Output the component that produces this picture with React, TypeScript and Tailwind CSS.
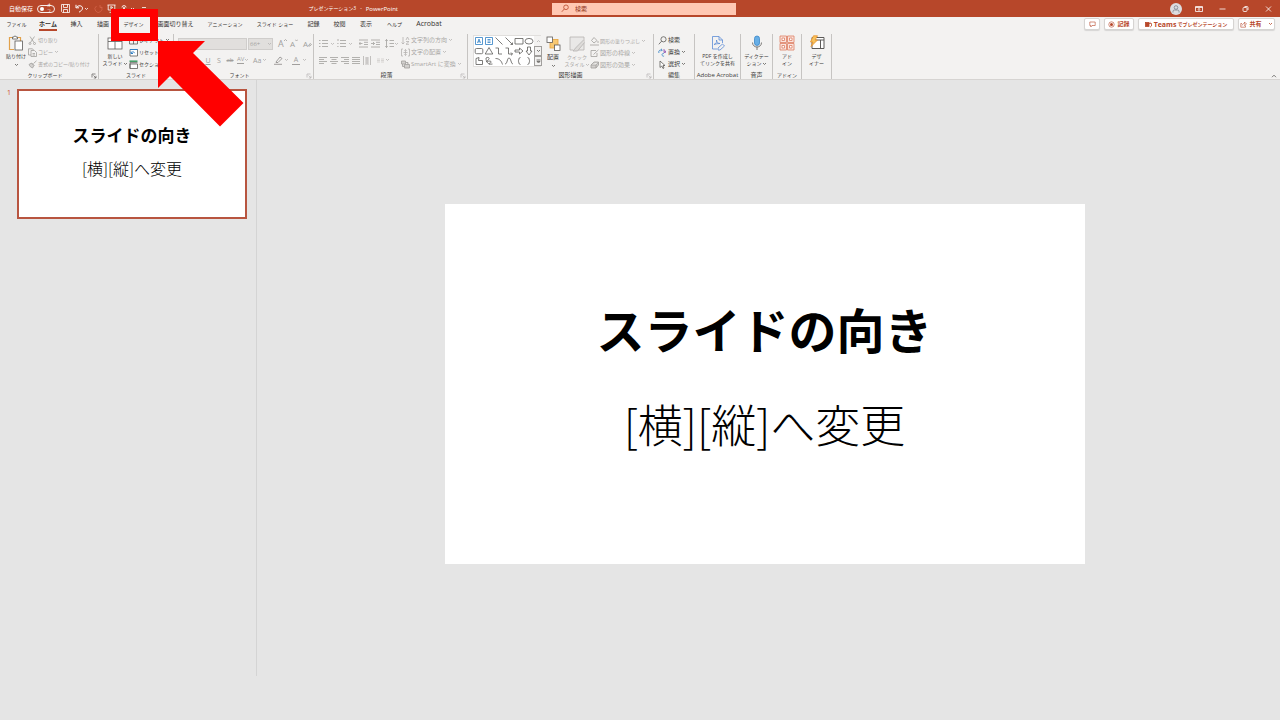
import React from "react";

type IconProps = { w?: number; h?: number; c?: string; children: React.ReactNode };

const DARK = "#5c5a58";
const DIM = "#b5b3b1";
const BLUE = "#2f7fc4";
const RUST = "#b7472a";

function Icon({ w = 9, h = 9, c = DARK, children }: IconProps) {
  return (
    <svg
      width={w}
      height={h}
      viewBox={`0 0 ${w} ${h}`}
      fill="none"
      stroke={c}
      strokeWidth="0.8"
      className="block shrink-0"
      aria-hidden="true"
    >
      {children}
    </svg>
  );
}

function Chevron({ c = DARK }: { c?: string }) {
  return (
    <Icon w={5} h={4} c={c}>
      <path d="M1 1l1.5 1.5L4 1" />
    </Icon>
  );
}

function Launcher({ c = DARK }: { c?: string }) {
  return (
    <button type="button" aria-label="詳細設定" className="flex">
      <Icon w={6} h={6} c={c}>
        <path d="M1 4.5V1h3.5M2.5 2.5l2.5 2.5M5 2.8V5H2.8" strokeWidth="0.7" />
      </Icon>
    </button>
  );
}

type GroupProps = {
  name: string;
  className: string;
  body?: string;
  launcher?: string;
  nameClass?: string;
  children: React.ReactNode;
};

function Group({ name, className, body = "", launcher, nameClass = "text-[5px]", children }: GroupProps) {
  return (
    <section aria-label={name} className={`flex shrink-0 flex-col border-r border-[#c6c4c2] ${className}`}>
      <div className={`flex h-[37px] shrink-0 ${body}`}>{children}</div>
      <div className="relative flex h-2 shrink-0 items-center justify-center whitespace-nowrap">
        <span className={`leading-[8px] ${nameClass}`}>{name}</span>
        {launcher && (
          <span className="absolute right-px top-[2px]">
            <Launcher c={launcher} />
          </span>
        )}
      </div>
    </section>
  );
}

type RowProps = { icon: React.ReactNode; text: string; size?: string; dim?: boolean; chevron?: boolean };

function Row({ icon, text, size = "text-[5px]", dim = false, chevron = false }: RowProps) {
  return (
    <button
      type="button"
      className={`flex h-3 items-center gap-px whitespace-nowrap ${size} ${dim ? "text-[#a9a7a5]" : "text-[#3b3a39]"}`}
    >
      {icon}
      <span>{text}</span>
      {chevron && <Chevron c={dim ? DIM : DARK} />}
    </button>
  );
}

type BigProps = {
  icon: React.ReactNode;
  lines: string[];
  dim?: boolean;
  chevron?: "below" | "inline";
  size?: string;
  className?: string;
};

function Big({ icon, lines, dim = false, chevron, size = "text-[5px]", className = "" }: BigProps) {
  return (
    <button
      type="button"
      className={`flex shrink-0 flex-col items-center whitespace-nowrap pt-px ${size} ${
        dim ? "text-[#a9a7a5]" : "text-[#3b3a39]"
      } ${className}`}
    >
      {icon}
      {lines.map((l, i) => (
        <span key={l} className="flex h-[7px] items-center leading-[7px] first-of-type:mt-[2px]">
          {l}
          {chevron === "inline" && i === lines.length - 1 && <Chevron c={dim ? DIM : DARK} />}
        </span>
      ))}
      {chevron === "below" && (
        <span className="mt-[3px]">
          <Chevron c={dim ? DIM : DARK} />
        </span>
      )}
    </button>
  );
}

function Lines({ kind }: { kind: "left" | "center" | "right" | "justify" }) {
  const d = {
    left: "M0 1.5h8M0 3.5h5M0 5.5h8M0 7.5h5",
    center: "M0 1.5h8M1.5 3.5h5M0 5.5h8M1.5 7.5h5",
    right: "M0 1.5h8M3 3.5h5M0 5.5h8M3 7.5h5",
    justify: "M0 1.5h8M0 3.5h8M0 5.5h8M0 7.5h8",
  }[kind];
  return (
    <button type="button" aria-label={kind}>
      <Icon w={8} c="#a19f9d">
        <path d={d} />
      </Icon>
    </button>
  );
}

const shapes: string[] = [
  "M1.5 1.5h7v7h-7zM3.5 7L5 3l1.5 4M4 5.8h2",
  "M1.5 1.5h7v7h-7zM3.5 3.5h3M3.5 5h3M3.5 6.5h3",
  "M1.5 1.5l7 7",
  "M1.5 1.5l7 7M8.5 6.5v2h-2",
  "M1 2.5h8v5.5H1z",
  "M9 5.2a4 2.8 0 1 1-8 0a4 2.8 0 1 1 8 0z",
  "M2.5 2.5h5a1.3 1.3 0 0 1 1.3 1.3v2.6a1.3 1.3 0 0 1-1.3 1.3h-5a1.3 1.3 0 0 1-1.3-1.3V3.8a1.3 1.3 0 0 1 1.3-1.3z",
  "M5 1.5l3.8 6.5H1.2z",
  "M1.5 2h3v6h3.5",
  "M1.5 2h3v6h4M7 6.5L8.5 8L7 9.4",
  "M1 4h4.5V2L9 5L5.5 8V6H1z",
  "M3.5 1v4H2l3 4l3-4H6.5V1z",
  "M2 2.5L5 1.5L4.5 4.5H8.5V8.5H2z",
  "M2 2c2-1.5 5 0 1.5 2.5s4-1 3.5 1.5s-3 0-1.5 2.5M2 2c0 4 2 7 6.5 6",
  "M1.5 2.5c4 0 6 2.5 7 6",
  "M1 8c2.5 0 2-6 4-6s2 6 4 6",
  "M6.500 1.500C4 1.500 5.500 4.500 4 5c1.500.5 0 3.500 2.500 3.500",
  "M3.500 1.500C6 1.500 4.500 4.500 6 5c-1.500.5 0 3.500-2.500 3.500",
];

function TitleBar() {
  return (
    <header className="grid h-[17px] shrink-0 grid-cols-[552fr_184fr_544fr] items-center bg-[#b7472a] text-[5px] text-white">
      <div className="flex items-center pl-[9px]">
        <span className="mr-[3px] w-[25px] text-[6px]">自動保存</span>
        <button
          type="button"
          aria-label="自動保存"
          className="mr-[6px] flex h-2 w-[18px] items-center gap-[2px] rounded-full border border-white/90 px-[2px] leading-[6px]"
        >
          <span className="size-1 shrink-0 rounded-full bg-white" />
          <span className="text-[4px]">オフ</span>
        </button>
        <div className="flex items-center">
          <button type="button" aria-label="保存" className="mr-[5px]">
            <Icon c="#fff">
              <path d="M.5 .5h8v8H1.500l-1-1zM2.500 .5v3h4v-3M2.500 8.500V5.500h4v3" />
            </Icon>
          </button>
          <button type="button" aria-label="元に戻す" className="mr-px flex items-center">
            <Icon c="#fff">
              <path d="M1 .8v3h3M1.200 3.500C3 1 7.500 1.200 7.500 4.200c0 2-2 3-3.500 4" strokeWidth="1" />
            </Icon>
            <Chevron c="#fff" />
          </button>
          <button type="button" aria-label="やり直し" className="ml-1 mr-1">
            <Icon c="#d4644a">
              <path d="M6 1v2.500h2.500M7 2.500A3.500 3.500 0 1 1 2.500 2" />
            </Icon>
          </button>
          <button type="button" aria-label="最初から表示" className="mr-1">
            <Icon c="#fff">
              <path d="M.5 1h8M1.200 1v5h6.600V1M4.500 6v2M2.500 8.300h4M3.800 2.500v2l2-1z" />
            </Icon>
          </button>
          <button type="button" aria-label="タッチ" className="flex items-center gap-[2px]">
            <Icon c="#fff" w={8}>
              <path d="M2 3.500a2 2 0 1 1 4 0M3.500 7V3.500a.5.5 0 0 1 1 0V5.500l2 .5v2.500h-3L2 6.500" />
            </Icon>
            <Chevron c="#fff" />
          </button>
          <button type="button" aria-label="その他" className="ml-[6px]">
            <Icon w={6} h={6} c="#fff">
              <path d="M1 1.500h4M1.500 3.500L3 5l1.500-1.500" />
            </Icon>
          </button>
        </div>
        <h1 className="ml-auto mr-[154px] flex items-center gap-1 whitespace-nowrap">
          <span>プレゼンテーション3</span>
          <span>-</span>
          <span className="text-[6px]">PowerPoint</span>
        </h1>
      </div>
      <label className="flex h-3 items-center gap-[6px] bg-[#ffc8b3] pl-[9px]">
        <Icon w={8} c={RUST}>
          <circle cx="5" cy="3.300" r="2.300" />
          <path d="M3.300 5L.8 7.800" />
        </Icon>
        <input
          type="text"
          aria-label="検索"
          placeholder="検索"
          className="min-w-0 flex-1 bg-transparent text-[6px] leading-3 outline-none placeholder:text-[#8c2c14] placeholder:opacity-100"
        />
      </label>
      <div className="flex items-center justify-end pr-2">
        <button type="button" aria-label="アカウント" className="mr-[13px] rounded-full bg-[#dcdde0]">
          <Icon w={12} h={12} c="#7b828c">
            <circle cx="6" cy="4.500" r="1.800" />
            <path d="M3 9.500V8.500a1.500 1.500 0 0 1 1.500-1.500h3A1.500 1.500 0 0 1 9 8.500v1" />
          </Icon>
        </button>
        <button type="button" aria-label="リボンの表示オプション" className="mr-4">
          <Icon w={8} h={6} c="#fff">
            <path d="M.5 .5h7v5h-7zM.5 1.500h7M4 5V2.500M3 3.500l1-1l1 1" />
          </Icon>
        </button>
        <button type="button" aria-label="最小化" className="mr-4">
          <Icon w={7} h={6} c="#fff">
            <path d="M.5 3h6" />
          </Icon>
        </button>
        <button type="button" aria-label="元のサイズに戻す" className="mr-4">
          <Icon w={7} h={6} c="#fff">
            <rect x="1" y="1.500" width="4" height="4" rx="1" />
            <path d="M2.500 .5H5a1 1 0 0 1 1 1V4" />
          </Icon>
        </button>
        <button type="button" aria-label="閉じる">
          <Icon w={7} h={6} c="#fff">
            <path d="M1 .5l5 5M6 .5l-5 5" />
          </Icon>
        </button>
      </div>
    </header>
  );
}

const tabs: [string, string][] = [
  ["ファイル", "w-[19px] text-[5px]"],
  ["ホーム", "w-[18px] text-[6px] font-bold"],
  ["挿入", "w-[13px] text-[6px]"],
  ["描画", "w-[14px] text-[6px]"],
  ["デザイン", "w-[21px] text-[5px]"],
  ["画面切り替え", "w-[37px] text-[6px]"],
  ["アニメーション", "w-[36px] text-[5px]"],
  ["スライド ショー", "w-[38px] text-[5px]"],
  ["記録", "w-[13px] text-[6px]"],
  ["校閲", "w-[13px] text-[6px]"],
  ["表示", "w-[14px] text-[6px]"],
  ["ヘルプ", "w-[17px] text-[5px]"],
  ["Acrobat", "w-[26px] text-[7px]"],
];

function TabBar() {
  const pill =
    "flex h-3 items-center justify-center gap-[2px] whitespace-nowrap rounded-[2px] border border-[#d6d4d2] bg-white font-bold text-[#b7472a] shadow-[0_1px_1px_rgba(0,0,0,0.12)]";
  return (
    <div className="flex h-[15px] shrink-0 items-start justify-between bg-[#f3f2f1] pl-[7px] pr-[5px] pt-px">
      <nav className="flex gap-[13px]">
        {tabs.map(([name, cls]) => (
          <a
            key={name}
            href="#"
            className={`flex h-[13px] items-end justify-center whitespace-nowrap border-b-2 text-[#333130] ${
              name === "ホーム" ? "border-[#b7472a]" : "border-transparent"
            } ${cls}`}
          >
            <span className="leading-[10px]">{name}</span>
          </a>
        ))}
      </nav>
      <div className="flex gap-1">
        <button type="button" aria-label="コメント" className={`w-4 ${pill}`}>
          <Icon w={7} h={7} c={RUST}>
            <path d="M.8 1h5.400v3.500H3L1.800 6V4.500H.8z" strokeWidth="0.600" />
          </Icon>
        </button>
        <button type="button" className={`w-[30px] text-[6px] ${pill}`}>
          <Icon w={7} h={7} c={RUST}>
            <circle cx="3.500" cy="3.500" r="2.700" strokeWidth="0.600" />
            <circle cx="3.500" cy="3.500" r="1.500" fill={RUST} stroke="none" />
          </Icon>
          記録
        </button>
        <button type="button" className={`w-[96px] text-[6px] ${pill}`}>
          <Icon w={7} h={7} c={RUST}>
            <rect x=".5" y="1.500" width="3.500" height="4" fill={RUST} />
            <path d="M4 2.500h2.500v2.500L5 6.200M5.500 1.300h.5" />
          </Icon>
          <span className="flex items-center">
            <span className="text-[7px]">Teams</span>
            <span className="ml-px text-[5px]">でプレゼンテーション</span>
          </span>
        </button>
        <button type="button" className={`w-[37px] text-[6px] ${pill}`}>
          <Icon w={7} h={7} c={RUST}>
            <path d="M2 2.500H.8v3.700h4.700V4.500M2 4.500c.3-1.500 1.500-2 2.500-2V1L6.500 3L4.500 4.500V3.500" strokeWidth="0.600" />
          </Icon>
          共有
          <span className="ml-1">
            <Chevron c={RUST} />
          </span>
        </button>
      </div>
    </div>
  );
}

function FontGroup() {
  const g = "text-[#a19f9d]";
  return (
    <Group name="フォント" className="w-[140px]" body="flex-col pl-1" launcher={DIM} nameClass="pr-2 text-[5px]">
      <div className={`flex h-[19px] shrink-0 items-center ${g}`}>
        <select
          aria-label="フォント名"
          className="h-3 w-[69px] appearance-none border border-[#cfcdcb] bg-[#e1dfdd]"
          defaultValue=""
        >
          <option value=""></option>
        </select>
        <div className="ml-px flex h-3 w-[25px] items-center justify-between border border-[#cfcdcb] bg-[#e1dfdd] pl-px">
          <span className="text-[6px]">66+</span>
          <Chevron c={DIM} />
        </div>
        <div className="ml-[5px] flex items-center gap-[3px]">
          <button type="button" className="flex w-2 items-start text-[9px] leading-3">
            A
            <Icon w={3} h={4} c="#a19f9d">
              <path d="M0 3l1.500-1.500L3 3" />
            </Icon>
          </button>
          <button type="button" className="ml-px flex w-2 items-start text-[8px] leading-3">
            A
            <Icon w={3} h={4} c="#a19f9d">
              <path d="M0 1.500L1.500 3L3 1.500" />
            </Icon>
          </button>
          <button type="button" className="ml-[2px] flex w-[10px] items-center text-[8px] leading-3">
            A
            <Icon w={4} h={6} c="#a19f9d">
              <path d="M.5 5L2 2.500l1.500 1L2 5z" />
            </Icon>
          </button>
        </div>
      </div>
      <div className={`flex h-[14px] shrink-0 items-center text-[7px] ${g}`}>
        <button type="button" className="w-3 font-bold">B</button>
        <button type="button" className="w-3 italic">I</button>
        <button type="button" className="w-3 underline">U</button>
        <button type="button" className="w-[10px]">S</button>
        <button type="button" className="w-3 text-[6px] line-through">ab</button>
        <button type="button" className="flex w-[17px] items-center pl-px">
          <span className="border-b border-[#a19f9d] text-[6px] leading-[7px]">AV</span>
          <Chevron c={DIM} />
        </button>
        <button type="button" className="flex w-[21px] items-center gap-px">
          Aa
          <Chevron c={DIM} />
        </button>
        <button type="button" aria-label="蛍光ペン" className="flex w-[18px] items-center gap-px">
          <Icon c="#8a8886">
            <path d="M2 6l4-5l2 1.500L4 6.500H2zM0 8.300h8" />
          </Icon>
          <Chevron c={DIM} />
        </button>
        <button type="button" className="flex items-center gap-[2px]">
          <span className="w-2 border-b border-[#a19f9d] text-center leading-[8px]">A</span>
          <Chevron c={DIM} />
        </button>
      </div>
    </Group>
  );
}

function ParagraphGroup() {
  return (
    <Group name="段落" className="w-[154px]" body="pl-[5px]" launcher={DIM} nameClass="pr-2 text-[6px]">
      <div className="flex w-[82px] shrink-0 flex-col">
        <div className="flex h-[19px] items-center">
          <button type="button" aria-label="箇条書き" className="flex w-[18px] items-center gap-[2px]">
            <Icon c="#a19f9d">
              <path d="M0 1.500h1.500M3 1.500h6M0 4.500h1.500M3 4.500h6M0 7.500h1.500M3 7.500h6" />
            </Icon>
            <Chevron c={DIM} />
          </button>
          <button type="button" aria-label="段落番号" className="flex w-[22px] items-center gap-[2px]">
            <Icon c="#a19f9d">
              <path d="M1 0v2M3 1.500h6M.3 4.500h1.200M3 4.500h6M.3 7.500h1.200M3 7.500h6" />
            </Icon>
            <Chevron c={DIM} />
          </button>
          <button type="button" aria-label="インデントを減らす" className="w-3">
            <Icon c="#a19f9d">
              <path d="M0 1h9M5 3.300h4M5 5.500h4M0 8h9M3.500 4.500H0M1.500 3L0 4.500L1.500 6" />
            </Icon>
          </button>
          <button type="button" aria-label="インデントを増やす" className="w-[14px]">
            <Icon c="#a19f9d">
              <path d="M0 1h9M5 3.300h4M5 5.500h4M0 8h9M0 4.500h3.500M2 3l1.500 1.500L2 6" />
            </Icon>
          </button>
          <button type="button" aria-label="行間" className="flex items-center">
            <Icon c="#a19f9d">
              <path d="M1.500 .5v8M.3 2L1.500 .5L2.700 2M.3 7l1.200 1.500L2.700 7M4.500 1.500H9M4.500 4.500H9M4.500 7.500H9" />
            </Icon>
            <Chevron c={DIM} />
          </button>
        </div>
        <div className="flex h-[14px] items-center gap-[3px]">
          <Lines kind="left" />
          <Lines kind="center" />
          <Lines kind="right" />
          <Lines kind="justify" />
          <button type="button" aria-label="均等割り付け" className="mr-[3px]">
            <Icon w={8} c={DIM}>
              <path d="M.5 0v9M7.500 0v9M2 2h4M2 4h4M2 6h4M2 8h4M4 1v7" />
            </Icon>
          </button>
          <button type="button" aria-label="段組み" className="flex items-center gap-px">
            <Icon w={7} c="#cfcdcb">
              <path d="M0 3h3M4 3h3M0 4.500h3M4 4.500h3M0 6h3M4 6h3" />
            </Icon>
            <Chevron c={DIM} />
          </button>
        </div>
      </div>
      <div className="flex flex-col">
        <Row dim chevron size="text-[6px]" text="文字列の方向" icon={<Icon c={DIM}><path d="M2 1v7M.5 6.500L2 8l1.500-1.500M5 4l1.500-3L8 4M5 5.500h3L5 8.300h3" /></Icon>} />
        <Row dim chevron size="text-[6px]" text="文字の配置" icon={<Icon c={DIM}><path d="M2 1H.5v7H2M7 1h1.500v7H7M4.500 1.500v6M3.300 2.700L4.500 1.500l1.200 1.200M3.300 6.300L4.500 7.500l1.200-1.200M2.500 4.500h4" /></Icon>} />
        <Row dim chevron size="text-[6px]" text="SmartArt に変換" icon={<Icon c="#a19f9d"><path d="M.5 1h4v3h-4zM3.500 4.500h5v3.500h-5zM5 2.500h2v2M1.500 4v2.500h2" fill="#d2d0ce" /></Icon>} />
      </div>
    </Group>
  );
}

function DrawingGroup() {
  return (
    <Group name="図形描画" className="w-[186px]" body="pl-[5px] pt-px" launcher={DIM} nameClass="pl-5 text-[6px]">
      <div className="flex h-8 w-[68px] shrink-0 border border-[#e1dfdd] bg-white">
        <div className="grid grid-cols-[repeat(6,10px)] grid-rows-[repeat(3,10px)]">
          {shapes.map((d, i) => (
            <button key={d} type="button" aria-label={`図形 ${i + 1}`}>
              <Icon w={10} h={10} c={i < 2 ? BLUE : DARK}>
                <path d={d} />
              </Icon>
            </button>
          ))}
        </div>
        <div className="flex flex-col">
          <button type="button" aria-label="上へ" className="flex h-[10px] w-2 items-center justify-center bg-[#f3f2f1]">
            <Icon w={5} h={4} c={DIM}><path d="M1 3l1.500-1.500L4 3" /></Icon>
          </button>
          <button type="button" aria-label="下へ" className="flex h-[10px] w-2 items-center justify-center border border-[#a19f9d] bg-[#f3f2f1]">
            <Chevron />
          </button>
          <button type="button" aria-label="その他の図形" className="flex h-[10px] w-2 items-center justify-center border border-[#a19f9d] bg-[#f3f2f1]">
            <Icon w={5} h={5}><path d="M.5 1h4M1 2.500L2.500 4L4 2.500z" /></Icon>
          </button>
        </div>
      </div>
      <Big
        className="w-6"
        size="text-[6px]"
        lines={["配置"]}
        chevron="below"
        icon={
          <Icon w={15} h={16}>
            <rect x="4" y="3.500" width="8" height="8.500" fill="#f7c873" stroke="#e8a33d" />
            <rect x="1" y="1" width="5.500" height="5.500" fill="#fff" />
            <rect x="8.500" y="9" width="5.500" height="5.500" fill="#fff" />
          </Icon>
        }
      />
      <Big
        className="w-6"
        dim
        lines={["クイック", "スタイル"]}
        chevron="inline"
        icon={
          <Icon w={16} h={16} c={DIM}>
            <path d="M4 14H1V1h14v13H9" fill="#e9e8e7" />
            <path d="M14.500 4L7.500 11l-3.500 4h4.500l7-8.500" fill="#dddbd9" />
          </Icon>
        }
      />
      <div className="ml-px flex flex-col">
        <Row dim chevron size="text-[5px]" text="図形の塗りつぶし" icon={<Icon c="#a19f9d"><path d="M4 .5l3 3L4 6L1.500 3.500zM0 8h9M8 4v2" /></Icon>} />
        <Row dim chevron size="text-[6px]" text="図形の枠線" icon={<Icon c="#a19f9d"><path d="M6 1.500H1v6h6V4M3.500 5.500L8.500 .8" /></Icon>} />
        <Row dim chevron size="text-[6px]" text="図形の効果" icon={<Icon c="#a19f9d"><path d="M1 4l3-3h4.500v3L6 7H1zM1 4h5l2.500-3M6 4v3" fill="#d2d0ce" /></Icon>} />
      </div>
    </Group>
  );
}

function Ribbon() {
  return (
    <div className="flex h-12 shrink-0 border-b border-[#d6d4d2] bg-[#f3f2f1] pt-[2px] text-[#3b3a39]">
      <Group name="クリップボード" className="w-[99px]" body="pl-1" launcher={DARK} nameClass="pr-2 text-[5px]">
        <Big
          className="w-6"
          lines={["貼り付け"]}
          chevron="below"
          icon={
            <Icon w={16} h={16}>
              <path d="M5 2.500H1.500v12H6M10 2.500h2.500V6" stroke="#e2a14a" strokeWidth="1.200" />
              <path d="M4.500 4V2h1.500a1 1 0 0 1 2 0H9.500v2z" fill="#fff" />
              <rect x="7" y="6" width="7.500" height="9" fill="#fff" />
            </Icon>
          }
        />
        <div className="flex flex-col">
          <Row dim text="切り取り" icon={<Icon c="#a19f9d"><path d="M2 .5l4 6M6.500 .5l-4 6" /><circle cx="2" cy="7.500" r="1" /><circle cx="6.500" cy="7.500" r="1" /></Icon>} />
          <Row dim chevron text="コピー" icon={<Icon c="#a19f9d"><path d="M3 7H.5V.8h4L5.500 2M3 2.500h3.500l2 2v4H3zM4.500 5.500h2.500M4.500 7h2.500" /></Icon>} />
          <Row dim text="書式のコピー/貼り付け" icon={<Icon c="#a19f9d"><path d="M8.500 .8L5.500 3.500M3.500 3l2.500 2.500M1 4.500l2.500-1.500L6 5.500L4.500 8C3 7.500 1.500 6 1 4.500z" fill="#d2d0ce" /></Icon>} />
        </div>
      </Group>

      <Group name="スライド" className="w-[75px]" body="pl-1">
        <Big
          className="w-6"
          lines={["新しい", "スライド"]}
          chevron="inline"
          icon={
            <Icon w={16} h={16}>
              <rect x="1" y="3" width="14" height="11" fill="#fff" />
              <path d="M1 6.500h14M8 6.500V14" />
            </Icon>
          }
        />
        <div className="ml-[2px] flex flex-col">
          <Row chevron text="レイアウト" icon={<Icon><path d="M.5 1h8v7h-8zM.5 3h8M4.500 3v5" /></Icon>} />
          <Row text="リセット" icon={<Icon><path d="M1 1.500h7.500v6.500H1z" fill="#fff" /><path d="M1 1.500h7.500M2 3.500v2h2M2.200 5.200c1-2 3-1.500 3.500 0" stroke={BLUE} strokeWidth="1" /></Icon>} />
          <Row chevron text="セクション" icon={<Icon><path d="M1 4h7.500v4.500H1z" fill="#fff" /><path d="M.5 1.200h8" stroke="#3c9a5f" strokeWidth="1.500" /><path d="M1 2.500v6M1 2.700h7.500" /></Icon>} />
        </div>
      </Group>

      <FontGroup />
      <ParagraphGroup />
      <DrawingGroup />

      <Group name="編集" className="w-[41px]" body="flex-col pl-1" nameClass="text-[6px]">
        <Row size="text-[6px]" text="検索" icon={<Icon><circle cx="5.500" cy="3.300" r="2.600" /><path d="M3.600 5.200L.8 8.300" /></Icon>} />
        <Row chevron size="text-[6px]" text="置換" icon={<Icon><path d="M1 5a2 2 0 0 1 2-3h1M3 .8L4.300 2L3 3.300M6 5.500a1.400 1.400 0 1 0 .1 2.500" stroke={BLUE} /><path d="M6 1v3.500M6 3h1.500v1.500H6" stroke="#8a4bb0" /></Icon>} />
        <Row chevron size="text-[6px]" text="選択" icon={<Icon><path d="M2 1v6.500l1.800-1.500L5 8.500l1-.5L5 5.500h2z" fill="#fff" /></Icon>} />
      </Group>

      <Group name="Adobe Acrobat" className="w-[46px]" body="justify-center" nameClass="text-[6px]">
        <Big
          lines={["PDF を作成し", "てリンクを共有"]}
          icon={
            <Icon w={16} h={16} c="#5b8bd6">
              <path d="M8 14H3.500V1.500H10l3.500 3.500v3M10 1.500V5h3.500M5 9.500c2.500-1 3-3 2.500-4.500c0 2 1.500 3.500 3.500 3.500c-2 0-4 .3-6 1M9 13l4.500-4l2 2l-4.500 4H9z" />
            </Icon>
          }
        />
      </Group>

      <Group name="音声" className="w-8" body="justify-center" nameClass="text-[6px]">
        <Big
          lines={["ディクテー", "ション"]}
          chevron="inline"
          icon={
            <Icon w={12} h={16}>
              <rect x="3.500" y="1" width="5" height="9.500" rx="2.500" fill="#66aee6" stroke="#3a86c8" />
              <path d="M1.500 7.500c0 6 9 6 9 0M6 12v3" />
            </Icon>
          }
        />
      </Group>

      <Group name="アドイン" className="w-[29px]" body="justify-center">
        <Big
          lines={["アド", "イン"]}
          icon={
            <Icon w={16} h={16} c="#dd7d62">
              <path d="M1 1h6.500v6.500H1zM8.500 1H15v6.500H8.500zM1 8.500h6.500V15H1zM8.500 8.500H15V15H8.500z" fill="#fbe3dc" />
              <path d="M3 3h2.500v2.500H3zM10.500 3H13v2.500h-2.500zM3 10.500h2.500V13H3zM10.500 10.500H13V13h-2.500z" fill="#fff" />
            </Icon>
          }
        />
      </Group>

      <Group name="" className="w-[30px]" body="justify-center">
        <Big
          lines={["デザ", "イナー"]}
          icon={
            <Icon w={16} h={16}>
              <path d="M3 2.500h12v11H3zM3 5h12M11.500 5v8.500" fill="#fff" strokeWidth="1" />
              <path d="M4.500 .8h4L6 5h2.500L2 11.500L4 7H1.500z" fill="#f8c35c" stroke="#e8922b" />
            </Icon>
          }
        />
      </Group>

      <button type="button" aria-label="リボンを折りたたむ" className="ml-auto mr-[3px] self-end pb-px">
        <Icon w={6} h={4}><path d="M1 3.200L3 1.200L5 3.200" /></Icon>
      </button>
    </div>
  );
}

export default function App() {
  return (
    <div className="relative flex min-h-screen flex-col bg-[#e5e5e5] font-['Open_Sans','Noto_Sans_CJK_JP',sans-serif] leading-none">
      <TitleBar />
      <TabBar />
      <Ribbon />

      <div className="flex flex-1 pb-11">
        <aside aria-label="スライド一覧" className="flex w-[257px] shrink-0 items-start border-r border-[#d4d4d4] pt-[9px]">
          <span className="w-[17px] pr-[6px] text-right text-[7px] text-[#d0492b]">1</span>
          <button
            type="button"
            aria-label="スライド 1"
            className="flex h-[130px] w-[230px] flex-col items-center border-2 border-[#b85540] bg-white pt-[34px] font-['Noto_Sans_CJK_JP',sans-serif] text-black"
          >
            <span className="text-[17px] font-bold leading-5">スライドの向き</span>
            <span className="mt-[13px] text-[16px] font-light leading-5">[横][縦]へ変更</span>
          </button>
        </aside>

        <main className="flex flex-1 items-center justify-center pr-2 pt-3">
          <article className="flex aspect-video w-[640px] flex-col items-center bg-white pt-[100px] font-['Noto_Sans_CJK_JP',sans-serif] text-black">
            <h2 className="text-[48px] font-bold leading-[48px]">スライドの向き</h2>
            <p className="mt-[49px] text-[45px] font-light leading-[45px]">[横][縦]へ変更</p>
          </article>
        </main>
      </div>

      <div className="pointer-events-none absolute left-[111px] top-[9px] h-8 w-[47px] border-8 border-[#ff0000]" />
      <svg
        className="pointer-events-none absolute left-[158px] top-[41px]"
        width="86"
        height="86"
        viewBox="0 0 86 86"
        aria-hidden="true"
      >
        <polygon points="0,0 47,0 35,12 85.500,62 62,85.500 12,35 0,47" fill="#ff0000" />
      </svg>
    </div>
  );
}
